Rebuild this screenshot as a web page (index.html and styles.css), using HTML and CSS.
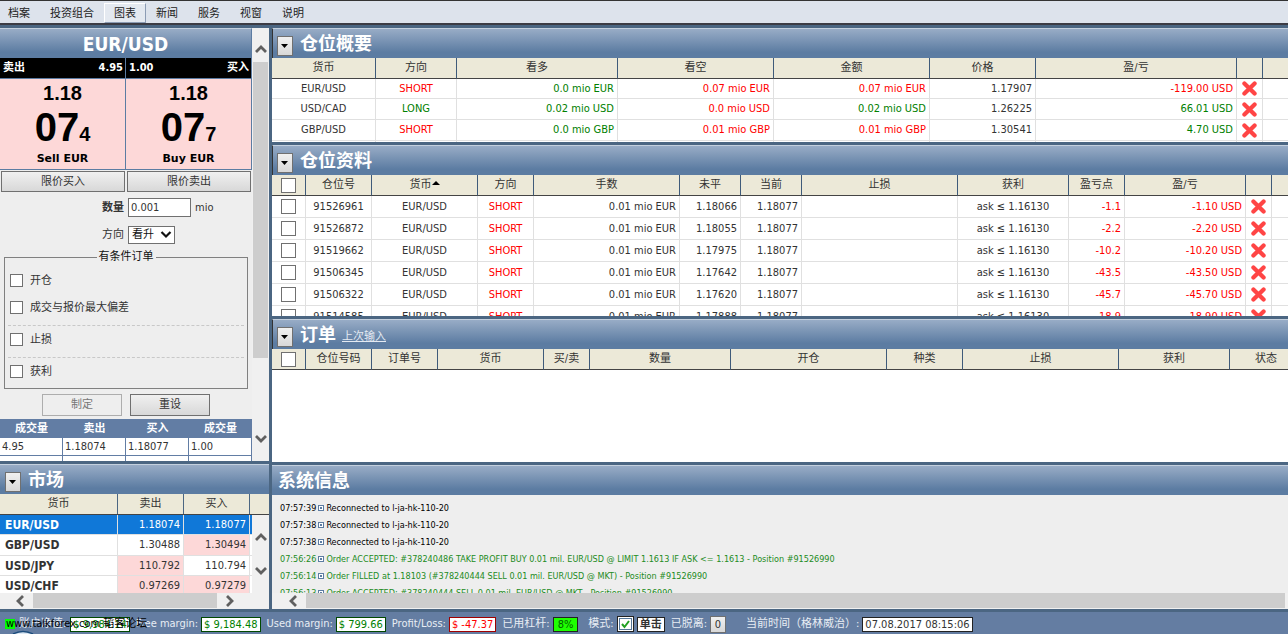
FILE: index.html
```html
<!DOCTYPE html>
<html lang="zh-CN">
<head>
<meta charset="utf-8">
<meta name="viewport" content="width=device-width, initial-scale=1">
<title>EUR/USD</title>
<link rel="stylesheet" href="styles.css">
</head>
<body>
<svg class="defs" aria-hidden="true">
  <symbol id="cross" viewBox="0 0 15 15"><path d="M2.8 2.8 12.2 12.2M12.2 2.8 2.8 12.2" fill="none" stroke="#fff" stroke-width="5.4" stroke-linecap="square" opacity=".5"/><path d="M2.4 2.4 12.6 12.6M12.6 2.4 2.4 12.6" fill="none" stroke="#ff4545" stroke-width="4.200" stroke-linecap="round"/></symbol>
  <symbol id="down" viewBox="0 0 8 5"><path d="M0 0h7L3.500 4z" fill="#000"/></symbol>
  <symbol id="chev-up" viewBox="0 0 12 10"><path d="M1 8 6 3l5 5" fill="none" stroke="#606060" stroke-width="2.800"/></symbol>
  <symbol id="chev-down" viewBox="0 0 12 10"><path d="M1 2l5 5 5-5" fill="none" stroke="#606060" stroke-width="2.800"/></symbol>
  <symbol id="chev-left" viewBox="0 0 10 12"><path d="M8 1 3 6l5 5" fill="none" stroke="#606060" stroke-width="2.800"/></symbol>
  <symbol id="chev-right" viewBox="0 0 10 12"><path d="M2 1l5 5-5 5" fill="none" stroke="#606060" stroke-width="2.800"/></symbol>
</svg>

<nav class="menu">
  <button>档案</button><button>投资组合</button><button class="active">图表</button><button>新闻</button><button>服务</button><button>视窗</button><button>说明</button>
</nav>

<main class="workspace">
  <div class="side">
    <section class="ticket">
      <div class="ticket-body">
        <h1 class="bar pair">EUR/USD</h1>
        <div class="quotes">
          <div class="liq"><span>卖出</span><span>4.95</span></div>
          <div class="liq"><span>1.00</span><span>买入</span></div>
          <button class="quote"><span class="base">1.18</span><span class="pips">07<small>4</small></span><span class="act">Sell EUR</span></button>
          <button class="quote"><span class="base">1.18</span><span class="pips">07<small>7</small></span><span class="act">Buy EUR</span></button>
        </div>
        <div class="limits"><button class="btn">限价买入</button><button class="btn">限价卖出</button></div>
        <form class="form">
          <div class="field amount"><label for="amt"><b>数量</b></label><input id="amt" type="text" value="0.001"><span>mio</span></div>
          <div class="field direction"><label for="dir">方向</label><span class="select"><select id="dir"><option>看升</option></select><svg viewBox="0 0 12 10" aria-hidden="true"><path d="M1.500 2 6 6.500 10.500 2" fill="none" stroke="#111" stroke-width="2.200"/></svg></span></div>
          <fieldset class="cond">
            <legend>有条件订单</legend>
            <label class="opt"><input type="checkbox">开仓</label>
            <label class="opt"><input type="checkbox">成交与报价最大偏差</label>
            <label class="opt ruled"><input type="checkbox">止损</label>
            <label class="opt ruled"><input type="checkbox">获利</label>
          </fieldset>
          <div class="actions"><button type="button" class="btn" disabled>制定</button><button type="button" class="btn">重设</button></div>
        </form>
        <table class="depth">
          <thead><tr><th>成交量</th><th>卖出</th><th>买入</th><th>成交量</th></tr></thead>
          <tbody><tr><td>4.95</td><td>1.18074</td><td>1.18077</td><td>1.00</td></tr><tr><td></td><td></td><td></td><td></td></tr></tbody>
        </table>
      </div>
      <div class="vbar"><button class="arrow" aria-label="向上"><svg class="cv"><use href="#chev-up"/></svg></button><div class="track ticket-track"><i class="thumb"></i></div><button class="arrow" aria-label="向下"><svg class="cv"><use href="#chev-down"/></svg></button></div>
    </section>

    <section class="panel market">
      <header class="bar"><button class="toggle" aria-label="菜单"><svg><use href="#down"/></svg></button><h2>市场</h2></header>
      <div class="market-head"><span>货币</span><span>卖出</span><span>买入</span><span></span></div>
      <div class="market-view">
        <div class="clip">
          <table class="rates">
            <colgroup><col class="w118"><col class="w66"><col class="w66"><col></colgroup>
            <tbody>
              <tr class="selected"><th scope="row">EUR/USD</th><td>1.18074</td><td>1.18077</td><td></td></tr>
              <tr><th scope="row">GBP/USD</th><td>1.30488</td><td class="hot">1.30494</td><td></td></tr>
              <tr><th scope="row">USD/JPY</th><td class="hot">110.792</td><td>110.794</td><td></td></tr>
              <tr><th scope="row">USD/CHF</th><td class="hot">0.97269</td><td class="hot">0.97279</td><td></td></tr>
            </tbody>
          </table>
        </div>
        <div class="vbar short"><button class="arrow" aria-label="向上"><svg class="cv"><use href="#chev-up"/></svg></button><button class="arrow" aria-label="向下"><svg class="cv"><use href="#chev-down"/></svg></button></div>
      </div>
      <div class="hbar market-bar"><button class="arrow" aria-label="向左"><svg class="ch"><use href="#chev-left"/></svg></button><i class="thumb"></i><button class="arrow" aria-label="向右"><svg class="ch"><use href="#chev-right"/></svg></button></div>
    </section>
  </div>

  <div class="content">
    <section class="panel">
      <header class="bar"><button class="toggle" aria-label="菜单"><svg><use href="#down"/></svg></button><h2>仓位概要</h2></header>
      <div class="clip">
        <table class="grid summary">
          <colgroup><col class="w104"><col class="w81"><col class="w161"><col class="w156"><col class="w156"><col class="w106"><col class="w201"><col class="w26"><col></colgroup>
          <thead><tr><th>货币</th><th>方向</th><th>看多</th><th>看空</th><th>金额</th><th>价格</th><th>盈/亏</th><th></th><th></th></tr></thead>
          <tbody>
            <tr><td class="c">EUR/USD</td><td class="c neg">SHORT</td><td class="pos">0.0 mio EUR</td><td class="neg">0.07 mio EUR</td><td class="neg">0.07 mio EUR</td><td>1.17907</td><td class="neg">-119.00 USD</td><td class="x"><button aria-label="平仓"><svg><use href="#cross"/></svg></button></td><td></td></tr>
            <tr><td class="c">USD/CAD</td><td class="c pos">LONG</td><td class="pos">0.02 mio USD</td><td class="neg">0.0 mio USD</td><td class="pos">0.02 mio USD</td><td>1.26225</td><td class="pos">66.01 USD</td><td class="x"><button aria-label="平仓"><svg><use href="#cross"/></svg></button></td><td></td></tr>
            <tr><td class="c">GBP/USD</td><td class="c neg">SHORT</td><td class="pos">0.0 mio GBP</td><td class="neg">0.01 mio GBP</td><td class="neg">0.01 mio GBP</td><td>1.30541</td><td class="pos">4.70 USD</td><td class="x"><button aria-label="平仓"><svg><use href="#cross"/></svg></button></td><td></td></tr>
            <tr><td></td><td></td><td></td><td></td><td></td><td></td><td></td><td></td><td></td></tr>
          </tbody>
        </table>
      </div>
    </section>

    <section class="panel">
      <header class="bar"><button class="toggle" aria-label="菜单"><svg><use href="#down"/></svg></button><h2>仓位资料</h2></header>
      <div class="clip">
        <table class="grid positions">
          <colgroup><col class="w34"><col class="w66"><col class="w106"><col class="w56"><col class="w146"><col class="w61"><col class="w61"><col class="w156"><col class="w111"><col class="w56"><col class="w121"><col class="w26"><col></colgroup>
          <thead><tr><th><input type="checkbox" aria-label="全选"></th><th>仓位号</th><th>货币<svg class="sort" viewBox="0 0 8 4" aria-hidden="true"><path d="M0 4h8L4 0z"/></svg></th><th>方向</th><th>手数</th><th>未平</th><th>当前</th><th>止损</th><th>获利</th><th>盈亏点</th><th>盈/亏</th><th></th><th></th></tr></thead>
          <tbody>
            <tr><td class="c"><input type="checkbox" aria-label="91526961"></td><td class="c">91526961</td><td class="c">EUR/USD</td><td class="c neg">SHORT</td><td>0.01 mio EUR</td><td>1.18066</td><td>1.18077</td><td></td><td class="c">ask ≤ 1.16130</td><td class="neg">-1.1</td><td class="neg">-1.10 USD</td><td class="x"><button aria-label="平仓"><svg><use href="#cross"/></svg></button></td><td></td></tr>
            <tr><td class="c"><input type="checkbox" aria-label="91526872"></td><td class="c">91526872</td><td class="c">EUR/USD</td><td class="c neg">SHORT</td><td>0.01 mio EUR</td><td>1.18055</td><td>1.18077</td><td></td><td class="c">ask ≤ 1.16130</td><td class="neg">-2.2</td><td class="neg">-2.20 USD</td><td class="x"><button aria-label="平仓"><svg><use href="#cross"/></svg></button></td><td></td></tr>
            <tr><td class="c"><input type="checkbox" aria-label="91519662"></td><td class="c">91519662</td><td class="c">EUR/USD</td><td class="c neg">SHORT</td><td>0.01 mio EUR</td><td>1.17975</td><td>1.18077</td><td></td><td class="c">ask ≤ 1.16130</td><td class="neg">-10.2</td><td class="neg">-10.20 USD</td><td class="x"><button aria-label="平仓"><svg><use href="#cross"/></svg></button></td><td></td></tr>
            <tr><td class="c"><input type="checkbox" aria-label="91506345"></td><td class="c">91506345</td><td class="c">EUR/USD</td><td class="c neg">SHORT</td><td>0.01 mio EUR</td><td>1.17642</td><td>1.18077</td><td></td><td class="c">ask ≤ 1.16130</td><td class="neg">-43.5</td><td class="neg">-43.50 USD</td><td class="x"><button aria-label="平仓"><svg><use href="#cross"/></svg></button></td><td></td></tr>
            <tr><td class="c"><input type="checkbox" aria-label="91506322"></td><td class="c">91506322</td><td class="c">EUR/USD</td><td class="c neg">SHORT</td><td>0.01 mio EUR</td><td>1.17620</td><td>1.18077</td><td></td><td class="c">ask ≤ 1.16130</td><td class="neg">-45.7</td><td class="neg">-45.70 USD</td><td class="x"><button aria-label="平仓"><svg><use href="#cross"/></svg></button></td><td></td></tr>
            <tr><td class="c"><input type="checkbox" aria-label="91514585"></td><td class="c">91514585</td><td class="c">EUR/USD</td><td class="c neg">SHORT</td><td>0.01 mio EUR</td><td>1.17888</td><td>1.18077</td><td></td><td class="c">ask ≤ 1.16130</td><td class="neg">-18.9</td><td class="neg">-18.90 USD</td><td class="x"><button aria-label="平仓"><svg><use href="#cross"/></svg></button></td><td></td></tr>
          </tbody>
        </table>
      </div>
    </section>

    <section class="panel">
      <header class="bar"><button class="toggle" aria-label="菜单"><svg><use href="#down"/></svg></button><h2>订单</h2><a class="last" href="#last">上次输入</a></header>
      <div class="clip">
        <table class="grid orders">
          <colgroup><col class="w34"><col class="w66"><col class="w66"><col class="w106"><col class="w46"><col class="w141"><col class="w156"><col class="w76"><col class="w156"><col class="w111"><col></colgroup>
          <thead><tr><th><input type="checkbox" aria-label="全选"></th><th>仓位号码</th><th>订单号</th><th>货币</th><th>买/卖</th><th>数量</th><th>开仓</th><th>种类</th><th>止损</th><th>获利</th><th>状态</th></tr></thead>
        </table>
      </div>
    </section>

    <section class="panel messages">
      <header class="bar"><h2>系统信息</h2></header>
      <ul class="log">
        <li><time>07:57:39</time><i></i>Reconnected to l-ja-hk-110-20</li>
        <li><time>07:57:38</time><i></i>Reconnected to l-ja-hk-110-20</li>
        <li><time>07:57:38</time><i></i>Reconnected to l-ja-hk-110-20</li>
        <li class="ok"><time>07:56:26</time><i></i>Order ACCEPTED: #378240486 TAKE PROFIT BUY 0.01 mil. EUR/USD @ LIMIT 1.1613 IF ASK &lt;= 1.1613 - Position #91526990</li>
        <li class="ok"><time>07:56:14</time><i></i>Order FILLED at 1.18103 (#378240444 SELL 0.01 mil. EUR/USD @ MKT) - Position #91526990</li>
        <li class="ok"><time>07:56:13</time><i></i>Order ACCEPTED: #378240444 SELL 0.01 mil. EUR/USD @ MKT - Position #91526990</li>
      </ul>
      <div class="hbar log-bar"><button class="arrow" aria-label="向左"><svg class="ch"><use href="#chev-left"/></svg></button><i class="thumb"></i></div>
    </section>
  </div>
</main>

<footer class="status">
  <div class="stat account"><i class="led"></i><span>账户净值:</span><output class="box good">$ 9,984.14</output></div>
  <div class="stat"><span>Free margin:</span><output class="box good">$ 9,184.48</output></div>
  <div class="stat"><span>Used margin:</span><output class="box good">$ 799.66</output></div>
  <div class="stat"><span>Profit/Loss:</span><output class="box bad">$ -47.37</output></div>
  <div class="stat"><span>已用杠杆:</span><output class="box use">8%</output></div>
  <div class="stat mode"><label for="oneclick">模式:</label><input id="oneclick" type="checkbox" checked><b class="box">单击</b></div>
  <div class="stat"><span>已脱离:</span><button class="btn zero">0</button></div>
  <div class="stat clock"><span>当前时间（格林威治）:</span><time class="box">07.08.2017 08:15:06</time></div>
  <svg class="orb" viewBox="0 0 22 4" aria-hidden="true"><path d="M1 4Q11-1 21 4" fill="#dce8f4" stroke="#1c4c7c" stroke-width="1.500"/></svg>
  <span class="mark">www.talkforex.com 韬客论坛</span>
</footer>
</body>
</html>
```
FILE: styles.css
```css
* { box-sizing: border-box; }
body {
  margin: 0;
  height: 100vh;
  display: flex;
  flex-direction: column;
  overflow: hidden;
  background: #4b6682;
  color: #333;
  font: 11px/16px "DejaVu Sans Condensed", "Noto Sans", "Noto Sans CJK SC", sans-serif;
}
button, input, select { font: inherit; color: inherit; margin: 0; padding: 0; }
button { border: 0; background: none; white-space: nowrap; }
svg { display: block; }
.defs { display: none; }
h1, h2 { margin: 0; }

.menu {
  flex: none;
  display: flex;
  height: 25px;
  padding: 2px 0 1px;
  background: #dde3ec;
  border-top: 1px solid #333;
  border-bottom: 2px solid #3c3c44;
  color: #222;
}
.menu button { padding: 1px 10px 0; height: 20px; }
.menu button:first-child { padding-left: 8px; }
.menu .active { border: 1px solid #8c9cb4; border-left-color: #fff; border-top-color: #fff; background: #e4e9f0; padding: 1px 9px 0; }

.workspace {
  flex: 1;
  min-height: 0;
  display: grid;
  grid-template-columns: 269px minmax(0, 1fr);
  gap: 3px;
  padding: 3px 0;
}
.side { display: grid; grid-template-rows: minmax(0, 433fr) minmax(0, 145fr); gap: 3px; min-height: 0; }
.content {
  display: grid;
  grid-template-rows: minmax(0, 114fr) minmax(0, 171fr) minmax(0, 143fr) minmax(0, 144fr);
  gap: 3px;
  min-height: 0;
}
.panel { display: flex; flex-direction: column; min-height: 0; overflow: hidden; background: #fff; }
.clip { flex: 1; min-height: 0; min-width: 0; overflow: hidden; }

.bar {
  flex: none;
  display: flex;
  align-items: center;
  height: 30px;
  padding: 0 5px;
  gap: 7px;
  border-top: 1px solid #c4d0de;
  background: linear-gradient(#98acc6, #5c7ca2 80%);
  color: #fff;
}
.bar h2 { font-size: 18px; line-height: 24px; font-weight: bold; }
.content .bar { border-left: 1px solid #333; padding-left: 4px; }
.content .messages .bar { border-left: 0; padding-left: 6px; }
.toggle {
  width: 16px;
  height: 20px;
  display: grid;
  place-items: center;
  margin-top: 5px;
  border: 1px solid #707070;
  background: linear-gradient(#f0f0f0, #d8d8d8);
}
.toggle svg { width: 8px; height: 5px; }
.last { color: #e4eaf2; margin-top: 5px; margin-left: -1px; }

.btn { border: 1px solid #707070; background: linear-gradient(#f0f0f0, #d8d8d8); color: #333; }
.btn:disabled { border-color: #adadad; background: #eee; color: #777; }
input[type="checkbox"] { appearance: none; flex: none; width: 13px; height: 13px; border: 1px solid #707070; background: #fff; }

/* order ticket */
.ticket { display: flex; min-height: 0; overflow: hidden; background: #eee; }
.ticket-body { flex: 1; min-width: 0; overflow: hidden; }
.pair { justify-content: center; font-size: 19px; border-right: 1px solid #5c7ca2; }
.quotes { display: grid; grid-template-columns: 1fr 1fr; }
.liq {
  display: flex;
  justify-content: space-between;
  height: 21px;
  padding: 0 2px 0 3px;
  line-height: 20px;
  font-weight: bold;
  background: #000;
  color: #fff;
  border-right: 1px solid #5c7ca2;
  border-bottom: 1px solid #5c7ca2;
}
.quote {
  display: flex;
  flex-direction: column;
  padding-top: 2px;
  background: #fdd8d8;
  color: #000;
  border-right: 1px solid #5c7ca2;
  border-bottom: 1px solid #5c7ca2;
  font-weight: bold;
  align-items: center;
}
.base { font: bold 20px/24px "Liberation Sans", sans-serif; }
.pips { font: bold 40px/44px "Liberation Sans", sans-serif; }
.pips small { font-size: 20px; line-height: 20px; }
.act { font: bold 11px/20px "DejaVu Sans", sans-serif; }
.limits { display: grid; grid-template-columns: 1fr 1fr; gap: 2px; padding: 1px 1px 0; }
.limits .btn { height: 21px; }
.field { display: grid; grid-template-columns: 124px auto 1fr; column-gap: 4px; align-items: center; }
.field label { text-align: right; }
.amount { padding-top: 6px; }
.amount input { width: 63px; height: 19px; border: 1px solid #707070; padding: 0 2px; background: #fff; }
.direction { padding-top: 9px; }
.select { display: grid; width: 47px; height: 18px; align-items: center; }
.select select { grid-area: 1 / 1; appearance: none; height: 18px; border: 1px solid #707070; border-radius: 0; background: #fff; padding: 0 3px; color: #111; }
.select svg { grid-area: 1 / 1; justify-self: end; width: 12px; height: 10px; margin-right: 3px; pointer-events: none; }
.cond { margin: 5px 4px 0; padding: 0 3px; border: 1px solid #808080; height: 140px; min-width: 0; }
.cond legend { margin: 0 auto; padding: 0 2px; color: #111; }
.opt { display: flex; align-items: center; gap: 7px; height: 27px; padding: 4px 2px 0; }
.opt + .ruled { margin-top: 6px; }
.opt.ruled { border-top: 1px dashed #c8c8c8; height: 32px; padding: 0 2px 4px; }
.opt.ruled + .ruled { margin-top: 0; }
.actions { display: flex; justify-content: center; gap: 8px; padding-top: 5px; }
.actions .btn { width: 80px; height: 22px; }
.depth { width: 100%; margin-top: 3px; table-layout: fixed; border-spacing: 0; background: #fff; }
.depth th { height: 19px; padding: 0; line-height: 16px; background: #627da4; color: #fff; }
.depth td { height: 18px; padding: 0 2px; line-height: 16px; border-right: 1px solid #627da4; border-bottom: 1px solid #627da4; }

/* scrollbars */
.vbar { flex: none; width: 17px; display: flex; flex-direction: column; align-items: stretch; background: #f0f0f0; }
.arrow { display: grid; place-items: center; flex: none; }
.vbar .arrow { height: 34px; padding-top: 8px; }
.cv { width: 12px; height: 10px; }
.ch { width: 10px; height: 12px; }
.thumb { display: block; background: #cdcdcd; }
.track { flex: 1; padding: 0 1px; }
.ticket-track .thumb { height: 81%; }
.ticket .vbar .arrow:last-child { padding: 0 0 11px; }
.short { justify-content: center; padding-bottom: 8px; }
.hbar { flex: none; display: flex; height: 16px; background: #f0f0f0; }
.hbar .arrow { width: 26px; }
.hbar .thumb { flex: 1; margin: 0 0 1px; }
.market-bar { padding: 0 26px 0 7px; }
.log-bar { padding: 0 3px 0 8px; }

/* market */
.market-head { display: grid; grid-template-columns: 118px 66px 66px 1fr; height: 21px; background: #ece9d8; border-bottom: 1px solid #444; text-align: center; line-height: 20px; }
.market-head span { border-right: 1px solid #4b6682; }
.market-head span:last-child { border: 0; }
.market-view { flex: 1; min-height: 0; display: flex; }
.rates { width: 100%; table-layout: fixed; border-spacing: 0; }
.rates th, .rates td { height: 20px; padding: 0 3px; line-height: 16px; text-align: right; border-right: 1px solid #e0e0e0; border-bottom: 1px solid #e0e0e0; }
.rates th { text-align: left; padding-left: 5px; font-size: 12px; }
.rates tr:nth-child(2) > * { height: 21px; }
.rates td:last-child { border-right: 0; padding: 0; }
.rates .hot { background: #fdd8d8; }
.rates .selected > * { background: #1078d8; color: #fff; }

/* data grids */
.grid { width: 100%; table-layout: fixed; border-spacing: 0; white-space: nowrap; }
.grid th { height: 21px; padding: 0; line-height: 16px; font-weight: normal; background: #ece9d8; border-right: 1px solid #3f5b7a; border-bottom: 1px solid #444; }
.grid td { height: 22px; padding: 0 3px; line-height: 16px; text-align: right; border-right: 1px solid #e0e0e0; border-bottom: 1px solid #e0e0e0; }
.grid th:last-child, .grid td:last-child { border-right: 0; }
.grid .c { text-align: center; }
.summary tbody tr > td { height: 20px; }
.summary tbody tr:nth-child(even) > td { height: 21px; }
.summary tbody tr:nth-child(3) > td { height: 21px; }
.grid .x { padding: 0; }
.grid .x svg { width: 15px; height: 15px; }
.x button { display: block; margin: 0 auto; }
.grid input { display: block; width: 15px; height: 15px; margin: 0 auto; }
.sort { display: inline-block; width: 8px; height: 4px; margin: 0 0 3px; }
.orders { min-width: 1030px; }
.pos { color: #008000; }
.neg { color: #f00; }
.w26 { width: 26px; } .w34 { width: 34px; } .w46 { width: 46px; } .w56 { width: 56px; }
.w61 { width: 61px; } .w66 { width: 66px; } .w76 { width: 76px; } .w81 { width: 81px; }
.w104 { width: 104px; } .w106 { width: 106px; } .w111 { width: 111px; } .w118 { width: 118px; }
.w121 { width: 121px; } .w141 { width: 141px; } .w146 { width: 146px; } .w156 { width: 156px; }
.w161 { width: 161px; } .w201 { width: 201px; }

/* messages */
.messages { background: #eee; }
.log { flex: 1; min-height: 0; overflow: hidden; list-style: none; margin: 0; padding: 5px 8px 0; color: #000; font: 9px/17px "DejaVu Sans Condensed", "Noto Sans", sans-serif; white-space: nowrap; }
.log .ok { color: #228b22; }
.log i { display: inline-block; width: 6px; height: 6px; margin: 0 2px; border: 1px solid #5c7ca2; background: #5c7ca2; box-shadow: inset 0 0 0 1px #fff; }

/* status bar */
.status { position: relative; flex: none; display: flex; align-items: center; gap: 6px; height: 22px; padding: 2px 5px 0; background: #647da2; color: #e8edf4; white-space: nowrap; }
.stat { display: flex; align-items: center; gap: 3px; }
.account { gap: 4px; }
.stat .box { height: 15px; line-height: 13px; padding: 0 2px; border: 1px solid #222; background: #fff; color: #333; }
.stat .good { border-color: #004800; color: #008000; }
.stat .bad { border-color: #a00000; color: #f00; }
.stat .use { padding: 0 4px; border-color: #222; background: #1eff00; color: #006000; }
.led { width: 10px; height: 10px; background: #0f0; }
.mode { margin-left: 4px; }
.mode input { width: 17px; height: 16px; border-color: #222; background: #fff url("data:image/svg+xml,%3Csvg xmlns='http://www.w3.org/2000/svg' viewBox='0 0 15 14'%3E%3Crect x='1.500' y='1.500' width='12' height='11' fill='none' stroke='%23557799'/%3E%3Cpath d='M4 7l2.500 3L11 4' fill='none' stroke='%2322a022' stroke-width='2'/%3E%3C/svg%3E") center / 15px 14px no-repeat; }
.zero { width: 16px; height: 17px; }
.clock { margin-left: 14px; }
.orb { position: absolute; left: 12px; bottom: 0; width: 22px; height: 4px; }
.mark { position: absolute; left: 6px; top: 4px; color: #000; font-family: "DejaVu Sans Condensed", "Noto Sans CJK SC", sans-serif; }
```
